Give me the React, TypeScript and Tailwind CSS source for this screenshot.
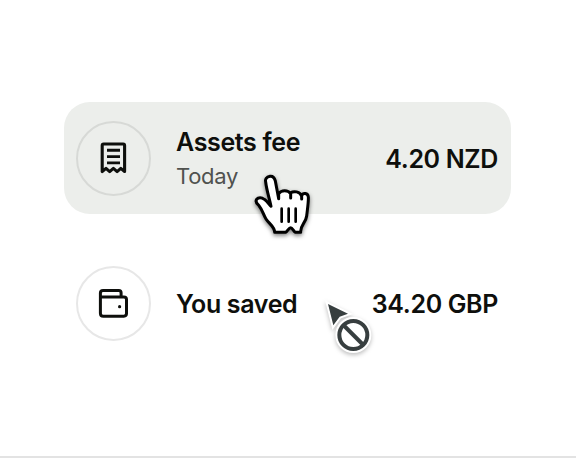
import type { ReactNode } from 'react';

function ReceiptIcon() {
  return (
    <svg width="37" height="37" viewBox="-0.5 -0.5 37 37" fill="none" stroke="#0e0f0c">
      <path
        d="M6.7 31V4.9Q6.7 3.5 8.1 3.5H27.7Q29.1 3.5 29.1 4.9V31L25.3 27.9L21.6 31.1L17.9 27.9L14.2 31.1L10.5 27.9Z"
        strokeWidth="3.1"
        strokeLinejoin="round"
      />
      <path d="M11.5 9.8H24.5M11.5 16.1H24.5M11.5 22.4H24.5" strokeWidth="2.9" />
    </svg>
  );
}

function WalletIcon() {
  return (
    <svg width="37" height="37" viewBox="-0.5 -0.5 37 37" fill="none" stroke="#0e0f0c">
      <path
        d="M4.9 11.4V7.6Q4.9 4.9 7.6 4.9H23.3Q25.6 4.9 25.6 7.2V11.4M4.9 11.4H28.4Q31 11.4 31 14V28.1Q31 30.7 28.4 30.7H7.9Q4.9 30.7 4.9 27.7Z"
        strokeWidth="3"
        strokeLinejoin="round"
      />
      <circle cx="24.1" cy="21.2" r="1.6" fill="#0e0f0c" stroke="none" />
    </svg>
  );
}

function HandCursor() {
  return (
    <svg
      className="absolute left-[245px] top-[165px] drop-shadow-[0_2px_2px_rgba(0,0,0,0.5)]"
      width="75"
      height="80"
      viewBox="0 0 225 240"
      fill="none"
      stroke="#000"
      strokeWidth="9"
      strokeLinejoin="round"
      strokeLinecap="round"
    >
      <path
        d="M78 124C71 116 66 108 58 103C50 97 40 97 35 103C30 110 35 116 42 122C52 134 55 149 63 162C72 176 89 185 89 202H122C127 199 132 188 137 188C142 188 146 199 151 202H167C165 181 183 173 185 153C187 134 191 110 190 96C189 84 174 82 170 92V102V94C166 78 145 78 137 83V99V86C129 74 109 74 101 86V101L91 48C88 37 82 33 75 34C64 36 60 42 62 51C65 77 74 103 78 124Z"
        fill="#fff"
      />
      <path d="M110 131V170M131 131V170M152 131V170" strokeWidth="8" />
    </svg>
  );
}

function BlockedCursor() {
  return (
    <svg
      className="absolute left-[315px] top-[290px] drop-shadow-[0_2px_2px_rgba(0,0,0,0.25)]"
      width="70"
      height="75"
      viewBox="0 0 210 225"
      fill="none"
    >
      <path d="M39 42L99 71L74 80L55 106Z" fill="#fff" stroke="#fff" strokeWidth="12" />
      <circle cx="115" cy="135" r="43" fill="#fff" stroke="#fff" strokeWidth="22" />
      <path d="M39 42L99 71L74 80L55 106Z" fill="#373e3f" />
      <circle cx="115" cy="135" r="42" stroke="#373e3f" strokeWidth="12" />
      <path d="M85 105L145 165" stroke="#373e3f" strokeWidth="12" />
    </svg>
  );
}

type RowProps = {
  icon: ReactNode;
  title: string;
  subtitle?: string;
  amount: string;
  active?: boolean;
};

function TransactionRow({ icon, title, subtitle, amount, active }: RowProps) {
  return (
    <div
      className={`flex h-28 items-center rounded-[26px] pl-[12.5px] pr-[13px] ${active ? 'bg-[#eceeeb]' : 'bg-white'}`}
    >
      <div
        className={`mt-px flex h-[75px] w-[75px] items-center justify-center rounded-full border-2 ${active ? 'border-[#d7d9d6]' : 'border-[#e7e7e7]'}`}
      >
        {icon}
      </div>
      <div className="ml-[25px] grow pt-[2px]">
        <div className="text-[25px] font-semibold leading-[35px] tracking-[-0.35px]">
          {title}
        </div>
        {subtitle && (
          <div className="text-[22px] leading-[33px] tracking-[-0.3px] text-[#50524f]">
            {subtitle}
          </div>
        )}
      </div>
      <div className="pt-[3px] text-[25px] font-semibold leading-[35px] tracking-[-0.35px]">
        {amount}
      </div>
    </div>
  );
}

function App() {
  return (
    <div className="relative flex h-[458px] w-[576px] flex-col overflow-hidden border-b-2 border-[#e3e3e3] bg-white pl-[63.5px] pr-[65px] pt-[102px] font-['Inter',sans-serif] text-[#0e0f0c]">
      <div className="flex flex-col gap-[33px]">
        <TransactionRow
          icon={<ReceiptIcon />}
          title="Assets fee"
          subtitle="Today"
          amount="4.20 NZD"
          active
        />
        <TransactionRow
          icon={<WalletIcon />}
          title="You saved"
          amount="34.20 GBP"
        />
      </div>
      <HandCursor />
      <BlockedCursor />
    </div>
  );
}

export default App;
